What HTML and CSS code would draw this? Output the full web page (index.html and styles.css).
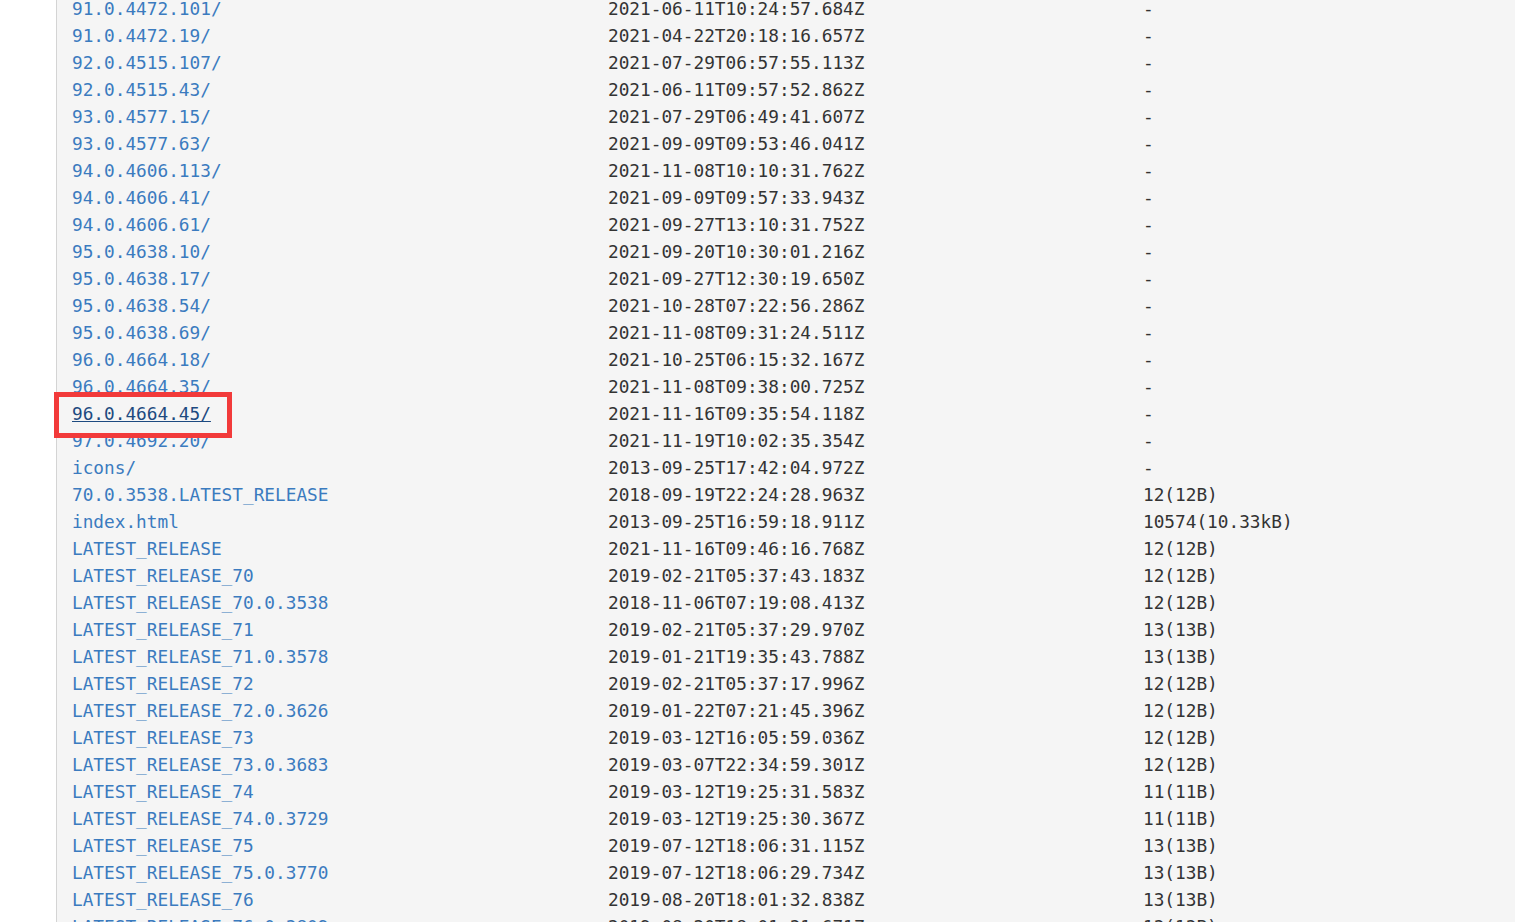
FILE: index.html
```html
<!DOCTYPE html>
<html lang="en">
  <head>
    <meta charset="UTF-8" />
    <title>Index of /chromedriver</title>
    <link rel="stylesheet" href="styles.css">
  </head>
  <body>
    <div class="listing">
      <table class="files">
        <tr><td class="name"><a href="#">91.0.4472.101/</a></td><td>2021-06-11T10:24:57.684Z</td><td>-</td></tr>
        <tr><td class="name"><a href="#">91.0.4472.19/</a></td><td>2021-04-22T20:18:16.657Z</td><td>-</td></tr>
        <tr><td class="name"><a href="#">92.0.4515.107/</a></td><td>2021-07-29T06:57:55.113Z</td><td>-</td></tr>
        <tr><td class="name"><a href="#">92.0.4515.43/</a></td><td>2021-06-11T09:57:52.862Z</td><td>-</td></tr>
        <tr><td class="name"><a href="#">93.0.4577.15/</a></td><td>2021-07-29T06:49:41.607Z</td><td>-</td></tr>
        <tr><td class="name"><a href="#">93.0.4577.63/</a></td><td>2021-09-09T09:53:46.041Z</td><td>-</td></tr>
        <tr><td class="name"><a href="#">94.0.4606.113/</a></td><td>2021-11-08T10:10:31.762Z</td><td>-</td></tr>
        <tr><td class="name"><a href="#">94.0.4606.41/</a></td><td>2021-09-09T09:57:33.943Z</td><td>-</td></tr>
        <tr><td class="name"><a href="#">94.0.4606.61/</a></td><td>2021-09-27T13:10:31.752Z</td><td>-</td></tr>
        <tr><td class="name"><a href="#">95.0.4638.10/</a></td><td>2021-09-20T10:30:01.216Z</td><td>-</td></tr>
        <tr><td class="name"><a href="#">95.0.4638.17/</a></td><td>2021-09-27T12:30:19.650Z</td><td>-</td></tr>
        <tr><td class="name"><a href="#">95.0.4638.54/</a></td><td>2021-10-28T07:22:56.286Z</td><td>-</td></tr>
        <tr><td class="name"><a href="#">95.0.4638.69/</a></td><td>2021-11-08T09:31:24.511Z</td><td>-</td></tr>
        <tr><td class="name"><a href="#">96.0.4664.18/</a></td><td>2021-10-25T06:15:32.167Z</td><td>-</td></tr>
        <tr><td class="name"><a href="#">96.0.4664.35/</a></td><td>2021-11-08T09:38:00.725Z</td><td>-</td></tr>
        <tr><td class="name marked"><a href="#" class="active">96.0.4664.45/</a><span class="highlight"></span></td><td>2021-11-16T09:35:54.118Z</td><td>-</td></tr>
        <tr><td class="name"><a href="#">97.0.4692.20/</a></td><td>2021-11-19T10:02:35.354Z</td><td>-</td></tr>
        <tr><td class="name"><a href="#">icons/</a></td><td>2013-09-25T17:42:04.972Z</td><td>-</td></tr>
        <tr><td class="name"><a href="#">70.0.3538.LATEST_RELEASE</a></td><td>2018-09-19T22:24:28.963Z</td><td>12(12B)</td></tr>
        <tr><td class="name"><a href="#">index.html</a></td><td>2013-09-25T16:59:18.911Z</td><td>10574(10.33kB)</td></tr>
        <tr><td class="name"><a href="#">LATEST_RELEASE</a></td><td>2021-11-16T09:46:16.768Z</td><td>12(12B)</td></tr>
        <tr><td class="name"><a href="#">LATEST_RELEASE_70</a></td><td>2019-02-21T05:37:43.183Z</td><td>12(12B)</td></tr>
        <tr><td class="name"><a href="#">LATEST_RELEASE_70.0.3538</a></td><td>2018-11-06T07:19:08.413Z</td><td>12(12B)</td></tr>
        <tr><td class="name"><a href="#">LATEST_RELEASE_71</a></td><td>2019-02-21T05:37:29.970Z</td><td>13(13B)</td></tr>
        <tr><td class="name"><a href="#">LATEST_RELEASE_71.0.3578</a></td><td>2019-01-21T19:35:43.788Z</td><td>13(13B)</td></tr>
        <tr><td class="name"><a href="#">LATEST_RELEASE_72</a></td><td>2019-02-21T05:37:17.996Z</td><td>12(12B)</td></tr>
        <tr><td class="name"><a href="#">LATEST_RELEASE_72.0.3626</a></td><td>2019-01-22T07:21:45.396Z</td><td>12(12B)</td></tr>
        <tr><td class="name"><a href="#">LATEST_RELEASE_73</a></td><td>2019-03-12T16:05:59.036Z</td><td>12(12B)</td></tr>
        <tr><td class="name"><a href="#">LATEST_RELEASE_73.0.3683</a></td><td>2019-03-07T22:34:59.301Z</td><td>12(12B)</td></tr>
        <tr><td class="name"><a href="#">LATEST_RELEASE_74</a></td><td>2019-03-12T19:25:31.583Z</td><td>11(11B)</td></tr>
        <tr><td class="name"><a href="#">LATEST_RELEASE_74.0.3729</a></td><td>2019-03-12T19:25:30.367Z</td><td>11(11B)</td></tr>
        <tr><td class="name"><a href="#">LATEST_RELEASE_75</a></td><td>2019-07-12T18:06:31.115Z</td><td>13(13B)</td></tr>
        <tr><td class="name"><a href="#">LATEST_RELEASE_75.0.3770</a></td><td>2019-07-12T18:06:29.734Z</td><td>13(13B)</td></tr>
        <tr><td class="name"><a href="#">LATEST_RELEASE_76</a></td><td>2019-08-20T18:01:32.838Z</td><td>13(13B)</td></tr>
        <tr><td class="name"><a href="#">LATEST_RELEASE_76.0.3809</a></td><td>2019-08-20T18:01:31.671Z</td><td>13(13B)</td></tr>
      </table>
    </div>
  </body>
</html>
```

FILE: styles.css
```css
html,
body {
  margin: 0;
  height: 100%;
  overflow: hidden;
  background-color: #fff;
}
.listing {
  margin-left: 56px;
  min-height: 100%;
  border-left: 1px solid #d4d4d4;
  background-color: #f5f5f5;
  padding-left: 15px;
}
.files {
  margin-top: -4px;
  border-collapse: collapse;
  font-family: "DejaVu Sans Mono", "Liberation Mono", monospace;
  font-size: 17.75px;
  color: #333;
}
.files td {
  padding: 0;
  height: 27px;
  line-height: 27px;
  white-space: nowrap;
  vertical-align: middle;
}
.files td.name {
  width: 536px;
}
.files td:nth-child(2) {
  width: 535px;
}
.files a {
  color: #3b7bbf;
  text-decoration: none;
}
.files a.active {
  color: #1d4a80;
  text-decoration: underline;
}
.marked {
  position: relative;
}
.highlight {
  position: absolute;
  left: -18px;
  top: -9px;
  width: 178px;
  height: 46px;
  box-sizing: border-box;
  border: 5px solid #f23a3a;
}
```
